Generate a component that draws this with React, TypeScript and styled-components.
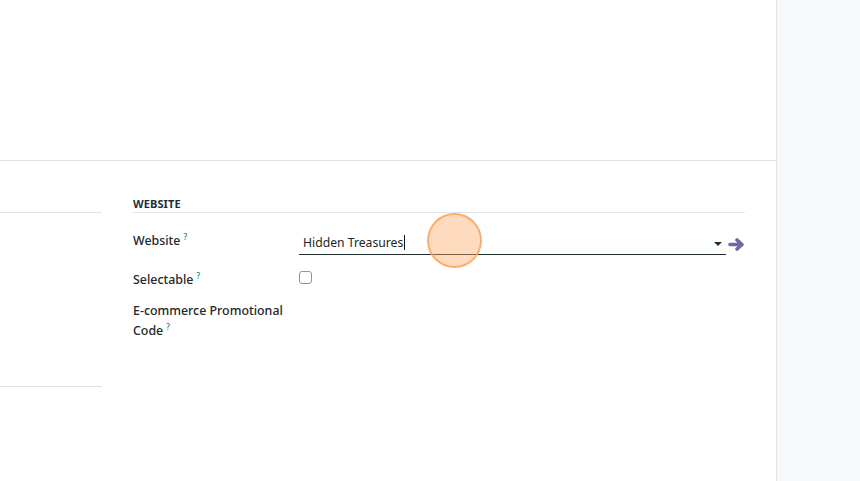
import React from "react";
import styled, { createGlobalStyle } from "styled-components";

const Global = createGlobalStyle`
  html, body { margin: 0; padding: 0; background: #ffffff; }
  body { font-family: "Noto Sans", "Open Sans", sans-serif; font-size: 12px; color: #212529; }
  * { box-sizing: border-box; }
`;

const Page = styled.div`
  display: flex;
  width: 860px;
  height: 481px;
  overflow: hidden;
`;

const Main = styled.div`
  width: 777px;
  border-right: 1px solid #e3e5e8;
  background: #fff;
  display: flex;
  flex-direction: column;
`;

const Side = styled.div`
  flex: 1;
  background: #f7f8fa;
`;

const Top = styled.div`
  height: 161px;
  border-bottom: 1px solid #dee2e6;
  flex: none;
`;

const Body = styled.div`
  display: flex;
  align-items: flex-start;
`;

const LeftGroup = styled.div`
  width: 102px;
  height: 175px;
  margin-top: 51px;
  border-top: 1px solid #dee2e6;
  border-bottom: 1px solid #dee2e6;
`;

const Group = styled.div`
  margin-left: 31px;
  width: 612px;
  display: flex;
  flex-direction: column;
`;

const GroupTitle = styled.div`
  margin-top: 36px;
  padding-bottom: 2px;
  border-bottom: 1px solid #e3e5e8;
  font-size: 11px;
  font-weight: 700;
  letter-spacing: 0.1px;
  line-height: 13px;
  color: #1e2f3b;
  text-transform: uppercase;
`;

const Row = styled.div<{ $top: number }>`
  display: grid;
  grid-template-columns: 166px 1fr;
  margin-top: ${(p) => p.$top}px;
  align-items: start;
`;

const Label = styled.div`
  line-height: 20px;
  font-size: 12.4px;
  font-weight: 500;
  color: #22272c;
  width: 160px;
`;

const Help = styled.sup`
  color: #017e84;
  font-size: 8px;
  line-height: 8px;
  margin-left: 3px;
  vertical-align: top;
  position: relative;
  top: 2px;
`;

const FieldWrap = styled.div`
  display: flex;
  align-items: center;
`;

const Input = styled.div`
  position: relative;
  flex: 1;
  height: 24px;
  border-bottom: 1px solid #1f2d2d;
  padding: 2px 4px;
  line-height: 20px;
  font-size: 12.2px;
  color: #212529;
  display: flex;
  align-items: center;
`;

const Caret = styled.span`
  display: inline-block;
  width: 1px;
  height: 15px;
  background: #111;
  margin-left: 1px;
`;

const Triangle = styled.span`
  position: absolute;
  right: 4px;
  top: 11px;
  width: 0;
  height: 0;
  border-left: 4px solid transparent;
  border-right: 4px solid transparent;
  border-top: 4px solid #1f2d3d;
`;

const ArrowBtn = styled.span`
  width: 19px;
  display: flex;
  justify-content: flex-end;
  margin-top: 3px;
`;

const Checkbox = styled.span`
  display: block;
  width: 13px;
  height: 13px;
  border: 1px solid #8f959b;
  border-radius: 3px;
  background: #fff;
  margin-top: 1px;
`;

const Touch = styled.div`
  position: absolute;
  left: 427px;
  top: 213px;
  width: 55px;
  height: 55px;
  border-radius: 50%;
  background: rgba(253, 168, 100, 0.42);
  border: 2px solid rgba(250, 160, 85, 0.75);
  pointer-events: none;
`;

function ArrowIcon() {
  return (
    <svg width="17" height="13" viewBox="0 0 17 13">
      <path
        d="M2 6.5 H12 M9 2 L14 6.5 L9 11"
        fill="none"
        stroke="#7467a6"
        strokeWidth="3.6"
        strokeLinecap="round"
        strokeLinejoin="round"
      />
    </svg>
  );
}

export default function App() {
  return (
    <>
      <Global />
      <Page>
        <Main>
          <Top />
          <Body>
            <LeftGroup />
            <Group>
              <GroupTitle>Website</GroupTitle>
              <Row $top={18}>
                <Label>
                  Website<Help>?</Help>
                </Label>
                <FieldWrap>
                  <Input>
                    Hidden Treasures<Caret />
                    <Triangle />
                  </Input>
                  <ArrowBtn>
                    <ArrowIcon />
                  </ArrowBtn>
                </FieldWrap>
              </Row>
              <Row $top={15}>
                <Label>
                  Selectable<Help>?</Help>
                </Label>
                <Checkbox />
              </Row>
              <Row $top={11}>
                <Label>
                  E-commerce Promotional Code<Help>?</Help>
                </Label>
                <div />
              </Row>
            </Group>
          </Body>
        </Main>
        <Side />
      </Page>
      <Touch />
    </>
  );
}
